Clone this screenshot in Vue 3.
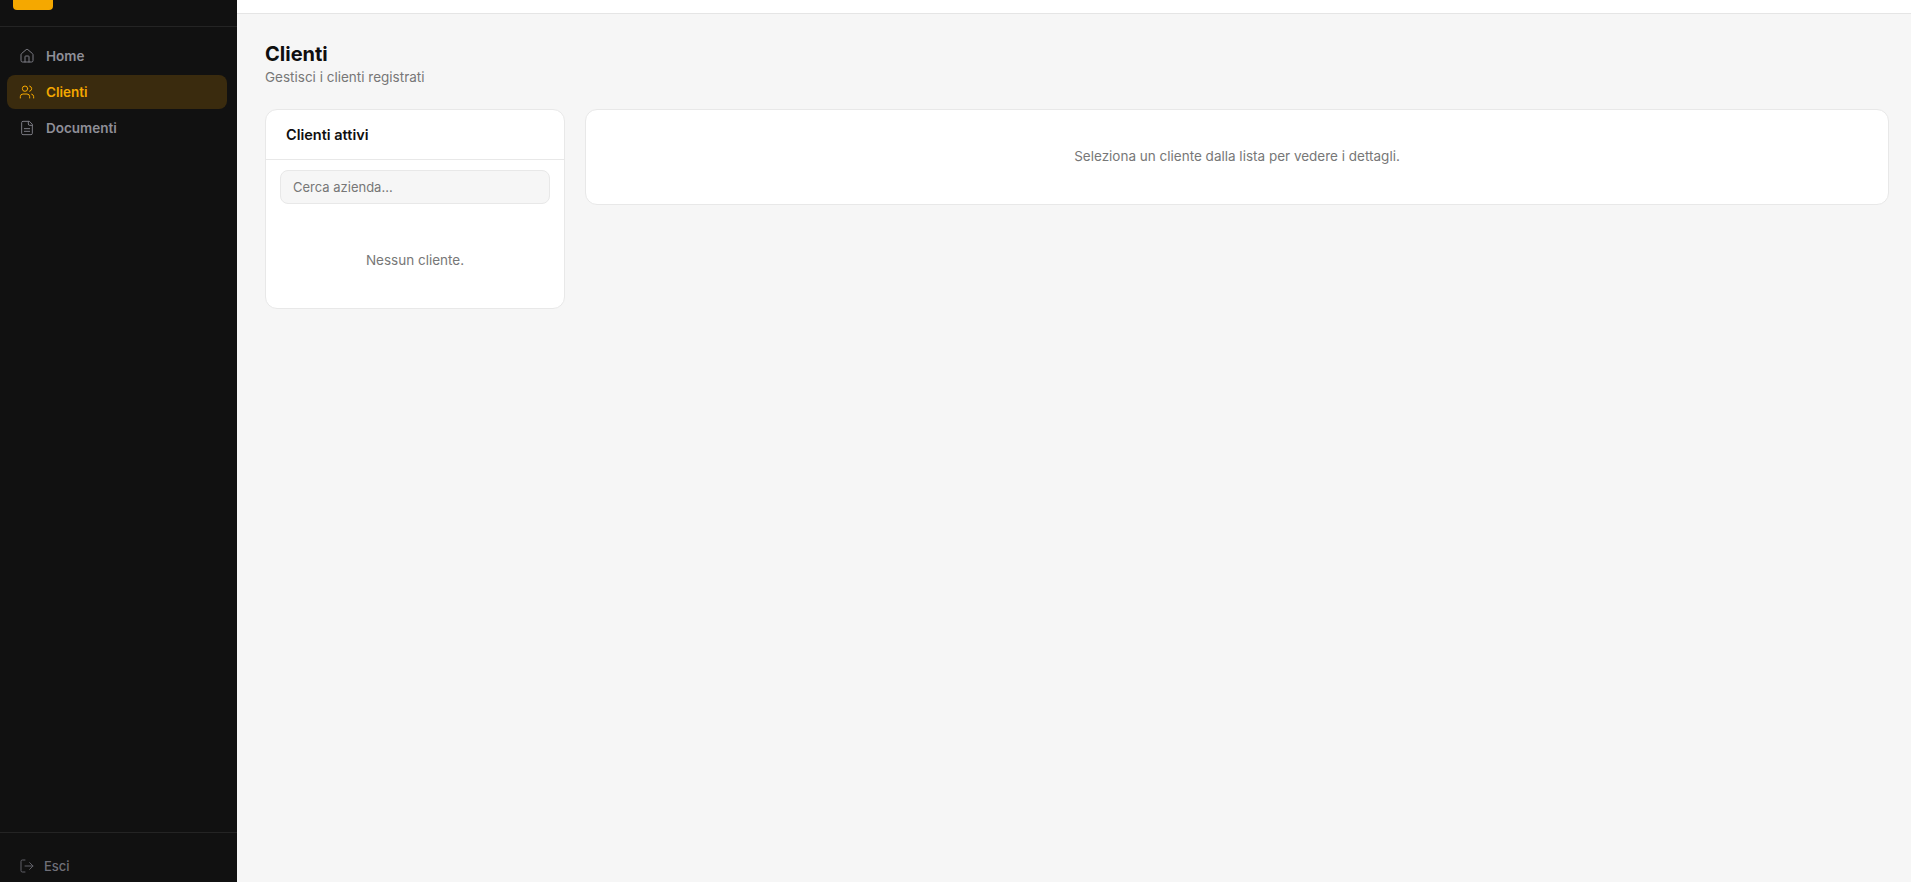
<template>
  <div class="layout">
    <aside class="sidebar">
      <div class="brand">
        <div class="logo"></div>
      </div>
      <nav class="nav">
        <a class="nav-item">
          <svg class="icon" viewBox="0 0 24 24" fill="none" stroke="currentColor" stroke-width="1.5" stroke-linecap="round" stroke-linejoin="round">
            <path d="M15 21v-8a1 1 0 0 0-1-1h-4a1 1 0 0 0-1 1v8" />
            <path d="M3 10a2 2 0 0 1 .709-1.528l7-5.999a2 2 0 0 1 2.582 0l7 5.999A2 2 0 0 1 21 10v9a2 2 0 0 1-2 2H5a2 2 0 0 1-2-2z" />
          </svg>
          <span>Home</span>
        </a>
        <a class="nav-item active">
          <svg class="icon" viewBox="0 0 24 24" fill="none" stroke="currentColor" stroke-width="1.5" stroke-linecap="round" stroke-linejoin="round">
            <path d="M16 21v-2a4 4 0 0 0-4-4H6a4 4 0 0 0-4 4v2" />
            <circle cx="9" cy="7" r="4" />
            <path d="M22 21v-2a4 4 0 0 0-3-3.87" />
            <path d="M16 3.13a4 4 0 0 1 0 7.75" />
          </svg>
          <span>Clienti</span>
        </a>
        <a class="nav-item">
          <svg class="icon" viewBox="0 0 24 24" fill="none" stroke="currentColor" stroke-width="1.5" stroke-linecap="round" stroke-linejoin="round">
            <path d="M15 2H6a2 2 0 0 0-2 2v16a2 2 0 0 0 2 2h12a2 2 0 0 0 2-2V7Z" />
            <path d="M14 2v4a2 2 0 0 0 2 2h4" />
            <path d="M16 13H8" />
            <path d="M16 17H8" />
          </svg>
          <span>Documenti</span>
        </a>
      </nav>
      <div class="sidebar-footer">
        <a class="logout">
          <svg class="icon" viewBox="0 0 24 24" fill="none" stroke="currentColor" stroke-width="1.5" stroke-linecap="round" stroke-linejoin="round">
            <path d="M9 21H5a2 2 0 0 1-2-2V5a2 2 0 0 1 2-2h4" />
            <path d="M16 17l5-5-5-5" />
            <path d="M21 12H9" />
          </svg>
          <span>Esci</span>
        </a>
      </div>
    </aside>

    <div class="main">
      <div class="topbar"></div>
      <main class="content">
        <h1 class="title">Clienti</h1>
        <p class="subtitle">Gestisci i clienti registrati</p>
        <div class="columns">
          <section class="card list-card">
            <header class="card-header">Clienti attivi</header>
            <div class="search-wrap">
              <input class="search" type="text" placeholder="Cerca azienda..." />
            </div>
            <p class="empty">Nessun cliente.</p>
          </section>
          <section class="card detail-card">
            <p class="detail-empty">Seleziona un cliente dalla lista per vedere i dettagli.</p>
          </section>
        </div>
      </main>
    </div>
  </div>
</template>

<script setup>
</script>

<style>
html,
body {
  margin: 0;
  height: 100%;
  overflow: hidden;
}
</style>

<style scoped>
.layout {
  display: flex;
  height: 882px;
  font-family: Inter, "Liberation Sans", sans-serif;
  background: #f6f6f6;
}

.sidebar {
  width: 237px;
  flex-shrink: 0;
  display: flex;
  flex-direction: column;
  background: #111111;
}

/* top of the logo is scrolled out of view in the reference */
.brand {
  height: 26px;
  border-bottom: 1px solid #242424;
  padding: 0 13px;
  overflow: hidden;
}

.logo {
  width: 40px;
  height: 10px;
  background: #f5a800;
  border-radius: 0 0 4px 4px;
}

.nav {
  flex: 1;
  display: flex;
  flex-direction: column;
  gap: 2px;
  padding: 12px 10px 12px 7px;
}

.nav-item {
  display: flex;
  align-items: center;
  gap: 11px;
  height: 34px;
  padding: 0 12px;
  border-radius: 8px;
  font-size: 13.5px;
  line-height: 20px;
  font-weight: 600;
  color: #8f8f98;
}

.nav-item span {
  margin-top: -1px;
}

.nav-item.active {
  background: #3a2b0e;
  color: #f5a800;
}

.icon {
  width: 16px;
  height: 16px;
  flex-shrink: 0;
  opacity: 0.85;
}

.nav-item.active .icon {
  opacity: 1;
}

.sidebar-footer {
  border-top: 1px solid #242424;
  height: 50px;
  box-sizing: border-box;
  padding: 16px 19px 0;
  display: flex;
  align-items: center;
}

.logout {
  display: flex;
  align-items: center;
  gap: 9px;
  font-size: 13px;
  font-weight: 500;
  color: #6f6f78;
}

.main {
  flex: 1;
  min-width: 0;
}

.topbar {
  height: 14px;
  box-sizing: border-box;
  background: #ffffff;
  border-bottom: 1px solid #e5e5e5;
}

.content {
  padding: 28px 22px 0 28px;
}

.title {
  margin: 0;
  font-size: 20px;
  line-height: 24px;
  font-weight: 700;
  color: #0f0f0f;
}

.subtitle {
  margin: 1px 0 0;
  font-size: 13.5px;
  line-height: 20px;
  color: #777777;
}

.columns {
  display: flex;
  align-items: flex-start;
  gap: 20px;
  margin-top: 22px;
}

.card {
  background: #ffffff;
  border: 1px solid #e8e8e8;
  border-radius: 12px;
  box-sizing: border-box;
}

.list-card {
  width: 300px;
  height: 200px;
  flex-shrink: 0;
}

.card-header {
  height: 50px;
  box-sizing: border-box;
  padding: 0 20px;
  display: flex;
  align-items: center;
  border-bottom: 1px solid #e8e8e8;
  font-size: 14.5px;
  font-weight: 600;
  color: #0f0f0f;
}

.search-wrap {
  padding: 10px 14px 0;
}

.search {
  display: block;
  width: 100%;
  height: 34px;
  box-sizing: border-box;
  padding: 0 12px;
  border: 1px solid #e8e8e8;
  border-radius: 8px;
  background: #f6f6f6;
  font-family: inherit;
  font-size: 13px;
  color: #0f0f0f;
  outline: none;
}

.search::placeholder {
  color: #777777;
  opacity: 1;
}

.empty {
  margin: 46px 0 0;
  text-align: center;
  font-size: 13.5px;
  line-height: 20px;
  color: #777777;
}

.detail-card {
  flex: 1;
  min-width: 0;
  height: 96px;
  padding-bottom: 2px;
  display: flex;
  align-items: center;
  justify-content: center;
}

.detail-empty {
  margin: 0;
  font-size: 13.5px;
  line-height: 20px;
  color: #777777;
}
</style>
